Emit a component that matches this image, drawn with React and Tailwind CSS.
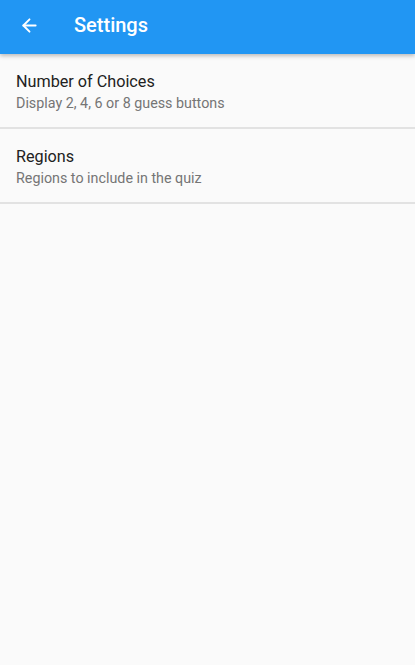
import { ArrowLeft } from 'lucide-react';

const items = [
    { title: 'Number of Choices', sub: 'Display 2, 4, 6 or 8 guess buttons' },
    { title: 'Regions', sub: 'Regions to include in the quiz' },
];

export default function App() {
    return (
        <div className="min-h-[665px] bg-[#fafafa]" style={{ fontFamily: 'Roboto, sans-serif' }}>
            <header className="h-[54px] pb-[4px] bg-[#2196f3] flex items-center shadow-[0_2px_4px_rgba(0,0,0,0.25)] relative z-10">
                <div className="w-[58px] flex justify-center">
                    <ArrowLeft className="text-white" size={21} strokeWidth={2.2} />
                </div>
                <h1 className="text-white text-[20px] font-medium ml-[16px]">Settings</h1>
            </header>
            {items.map(i => (
                <div key={i.title} className="h-[75px] px-4 pt-[2px] flex flex-col justify-center border-b-2 border-[#e2e2e2]">
                    <div className="text-[16.2px] text-[#212121] leading-[22px]">{i.title}</div>
                    <div className="text-[14.3px] text-[#757575] leading-[20px]">{i.sub}</div>
                </div>
            ))}
        </div>
    );
}
